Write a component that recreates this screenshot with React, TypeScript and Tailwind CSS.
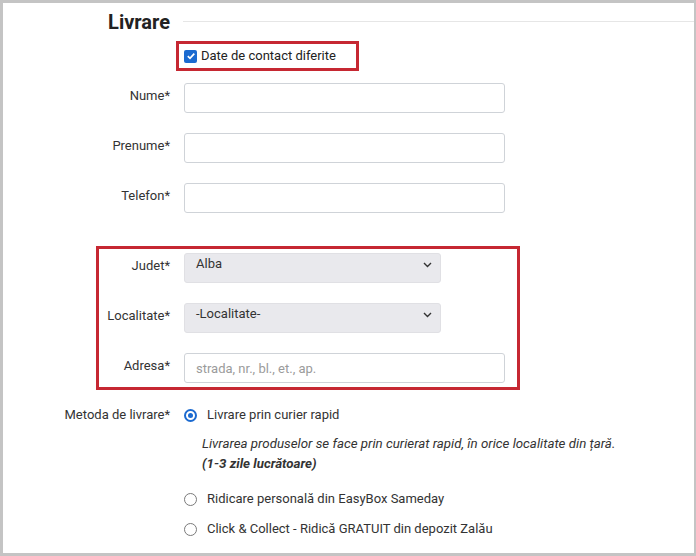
import React from 'react';

const font = { fontFamily: 'Roboto, "Liberation Sans", Arial, sans-serif' };

function TextField({ placeholder }: { placeholder?: string }) {
  return (
    <input
      type="text"
      placeholder={placeholder}
      className="w-[321px] h-[30px] border border-[#cfd3d8] rounded-[3px] px-[11px] text-[13px] text-[#333] bg-white outline-none placeholder:text-[#9b9b9b]"
    />
  );
}

function FakeSelect({ value }: { value: string }) {
  return (
    <div className="w-[257px] h-[30px] flex items-start bg-[#e9e9ed] border border-[#e0e0e4] rounded-[3px] pl-[11px] pr-[7px]">
      <span className="flex-1 text-[13px] leading-[20px] text-[#333]">{value}</span>
      <svg width="9" height="6" viewBox="0 0 9 6" className="mt-[8px] mr-[1px]">
        <path d="M1 1 L4.5 4.5 L8 1" fill="none" stroke="#333" strokeWidth="1.4" />
      </svg>
    </div>
  );
}

function Row({ label, labelWidth, children }: { label: string; labelWidth: string; children: React.ReactNode }) {
  return (
    <div className="flex items-start gap-[14px]">
      <div className={`${labelWidth} text-right pt-[3px] text-[13px] leading-[20px] text-[#333]`}>{label}</div>
      {children}
    </div>
  );
}

function Radio({ checked }: { checked?: boolean }) {
  if (checked) {
    return (
      <span className="w-[13px] h-[13px] rounded-full border-2 border-[#1b6ad0] flex items-center justify-center shrink-0">
        <span className="w-[5px] h-[5px] rounded-full bg-[#1b6ad0]" />
      </span>
    );
  }
  return <span className="w-[13px] h-[13px] rounded-full border-[1.5px] border-[#7a7a7a] shrink-0" />;
}

export default function App() {
  return (
    <div
      style={font}
      className="w-[696px] h-[556px] bg-white border-t-[3px] border-l-[3px] border-r-[2px] border-b-[3px] border-[#c4c4c4] overflow-hidden"
    >
      <div className="pt-[7px]">
        {/* heading */}
        <div className="flex items-start gap-[13px]">
          <h2 className="w-[167px] text-right text-[20px] leading-[24px] font-bold text-[#222]">Livrare</h2>
          <div className="flex-1 h-px bg-[#e6e6e6] mt-[11px]" />
        </div>

        {/* checkbox */}
        <div className="ml-[173px] mt-[7px] w-[183px] border-[3px] border-[#c62832] py-[2px] pl-[5px] flex items-center gap-[4px]">
          <span className="w-[13px] h-[13px] rounded-[2px] bg-[#1b6ad0] flex items-center justify-center">
            <svg width="10" height="10" viewBox="0 0 10 10">
              <path d="M1.8 5.2 L4 7.3 L8.3 2.6" fill="none" stroke="white" strokeWidth="1.7" />
            </svg>
          </span>
          <span className="text-[13px] leading-[20px] text-[#222]">Date de contact diferite</span>
        </div>

        {/* contact fields */}
        <div className="mt-[12px] flex flex-col gap-[20px]">
          <Row label="Nume*" labelWidth="w-[167px]"><TextField /></Row>
          <Row label="Prenume*" labelWidth="w-[167px]"><TextField /></Row>
          <Row label="Telefon*" labelWidth="w-[167px]"><TextField /></Row>
        </div>

        {/* address */}
        <div className="ml-[93px] mt-[33px] w-[424px] border-[3px] border-[#c62832] py-[4px] flex flex-col gap-[20px]">
          <Row label="Judet*" labelWidth="w-[71px]"><FakeSelect value="Alba" /></Row>
          <Row label="Localitate*" labelWidth="w-[71px]"><FakeSelect value="-Localitate-" /></Row>
          <Row label="Adresa*" labelWidth="w-[71px]"><TextField placeholder="strada, nr., bl., et., ap." /></Row>
        </div>

        {/* delivery method */}
        <div className="mt-[15px] flex items-start gap-[14px] text-[13px] leading-[20px] text-[#333]">
          <div className="w-[167px] text-right">Metoda de livrare*</div>
          <div className="flex flex-col">
            <label className="flex items-center gap-[10px]">
              <Radio checked />
              <span>Livrare prin curier rapid</span>
            </label>
            <p className="ml-[18px] mt-[9px] italic text-[13.3px]">
              Livrarea produselor se face prin curierat rapid, în orice localitate din țară.
              <br />
              <b>(1-3 zile lucrătoare)</b>
            </p>
            <label className="flex items-center gap-[10px] mt-[15px]">
              <Radio />
              <span>Ridicare personală din EasyBox Sameday</span>
            </label>
            <label className="flex items-center gap-[10px] mt-[10px]">
              <Radio />
              <span>Click &amp; Collect - Ridică GRATUIT din depozit Zalău</span>
            </label>
          </div>
        </div>
      </div>
    </div>
  );
}
